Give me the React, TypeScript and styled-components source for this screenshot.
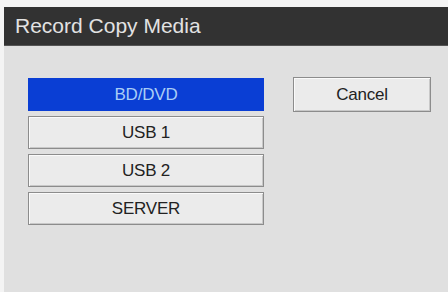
import React from "react";
import styled, { createGlobalStyle } from "styled-components";

const Global = createGlobalStyle`
  html, body { margin: 0; padding: 0; background: #f4f4f4; }
  body { font-family: "Liberation Sans", Arial, sans-serif; }
`;

const Frame = styled.div`
  width: 448px;
  height: 292px;
  box-sizing: border-box;
  padding: 7px 0 0 4px;
  background: #f4f4f4;
  display: flex;
  flex-direction: column;
`;

const TitleBar = styled.div`
  height: 38px;
  background: #323232;
  border-bottom: 1px solid #555;
  display: flex;
  align-items: center;
  padding-left: 11px;
  color: #e2e2e2;
  font-size: 21px;
`;

const Body = styled.div`
  flex: 1;
  background: #e0e0e0;
  display: flex;
  align-items: flex-start;
  padding: 32px 0 0 24px;
  gap: 29px;
`;

const List = styled.div`
  display: flex;
  flex-direction: column;
  gap: 5px;
  width: 236px;
`;

const Btn = styled.div<{ $active?: boolean; $w?: number; $h?: number; $offset?: number }>`
  box-sizing: border-box;
  height: ${(p) => p.$h ?? 33}px;
  width: ${(p) => (p.$w ? `${p.$w}px` : "100%")};
  margin-top: ${(p) => p.$offset ?? 0}px;
  display: flex;
  align-items: center;
  justify-content: center;
  font-size: 17px;
  letter-spacing: -0.2px;
  color: ${(p) => (p.$active ? "#a9cdf6" : "#222")};
  background: ${(p) => (p.$active ? "#0a3ed4" : "#ebebeb")};
  border: 1px solid ${(p) => (p.$active ? "#0a3ed4" : "#8c8c8c")};
  box-shadow: ${(p) => (p.$active ? "none" : "inset 1px 1px 0 #fafafa, inset -1px -1px 0 #c8c8c8")};
`;

export default function App() {
  return (
    <>
      <Global />
      <Frame>
        <TitleBar>Record Copy Media</TitleBar>
        <Body>
          <List>
            <Btn $active>BD/DVD</Btn>
            <Btn>USB 1</Btn>
            <Btn>USB 2</Btn>
            <Btn>SERVER</Btn>
          </List>
          <Btn $w={138} $h={35} $offset={-1}>Cancel</Btn>
        </Body>
      </Frame>
    </>
  );
}
